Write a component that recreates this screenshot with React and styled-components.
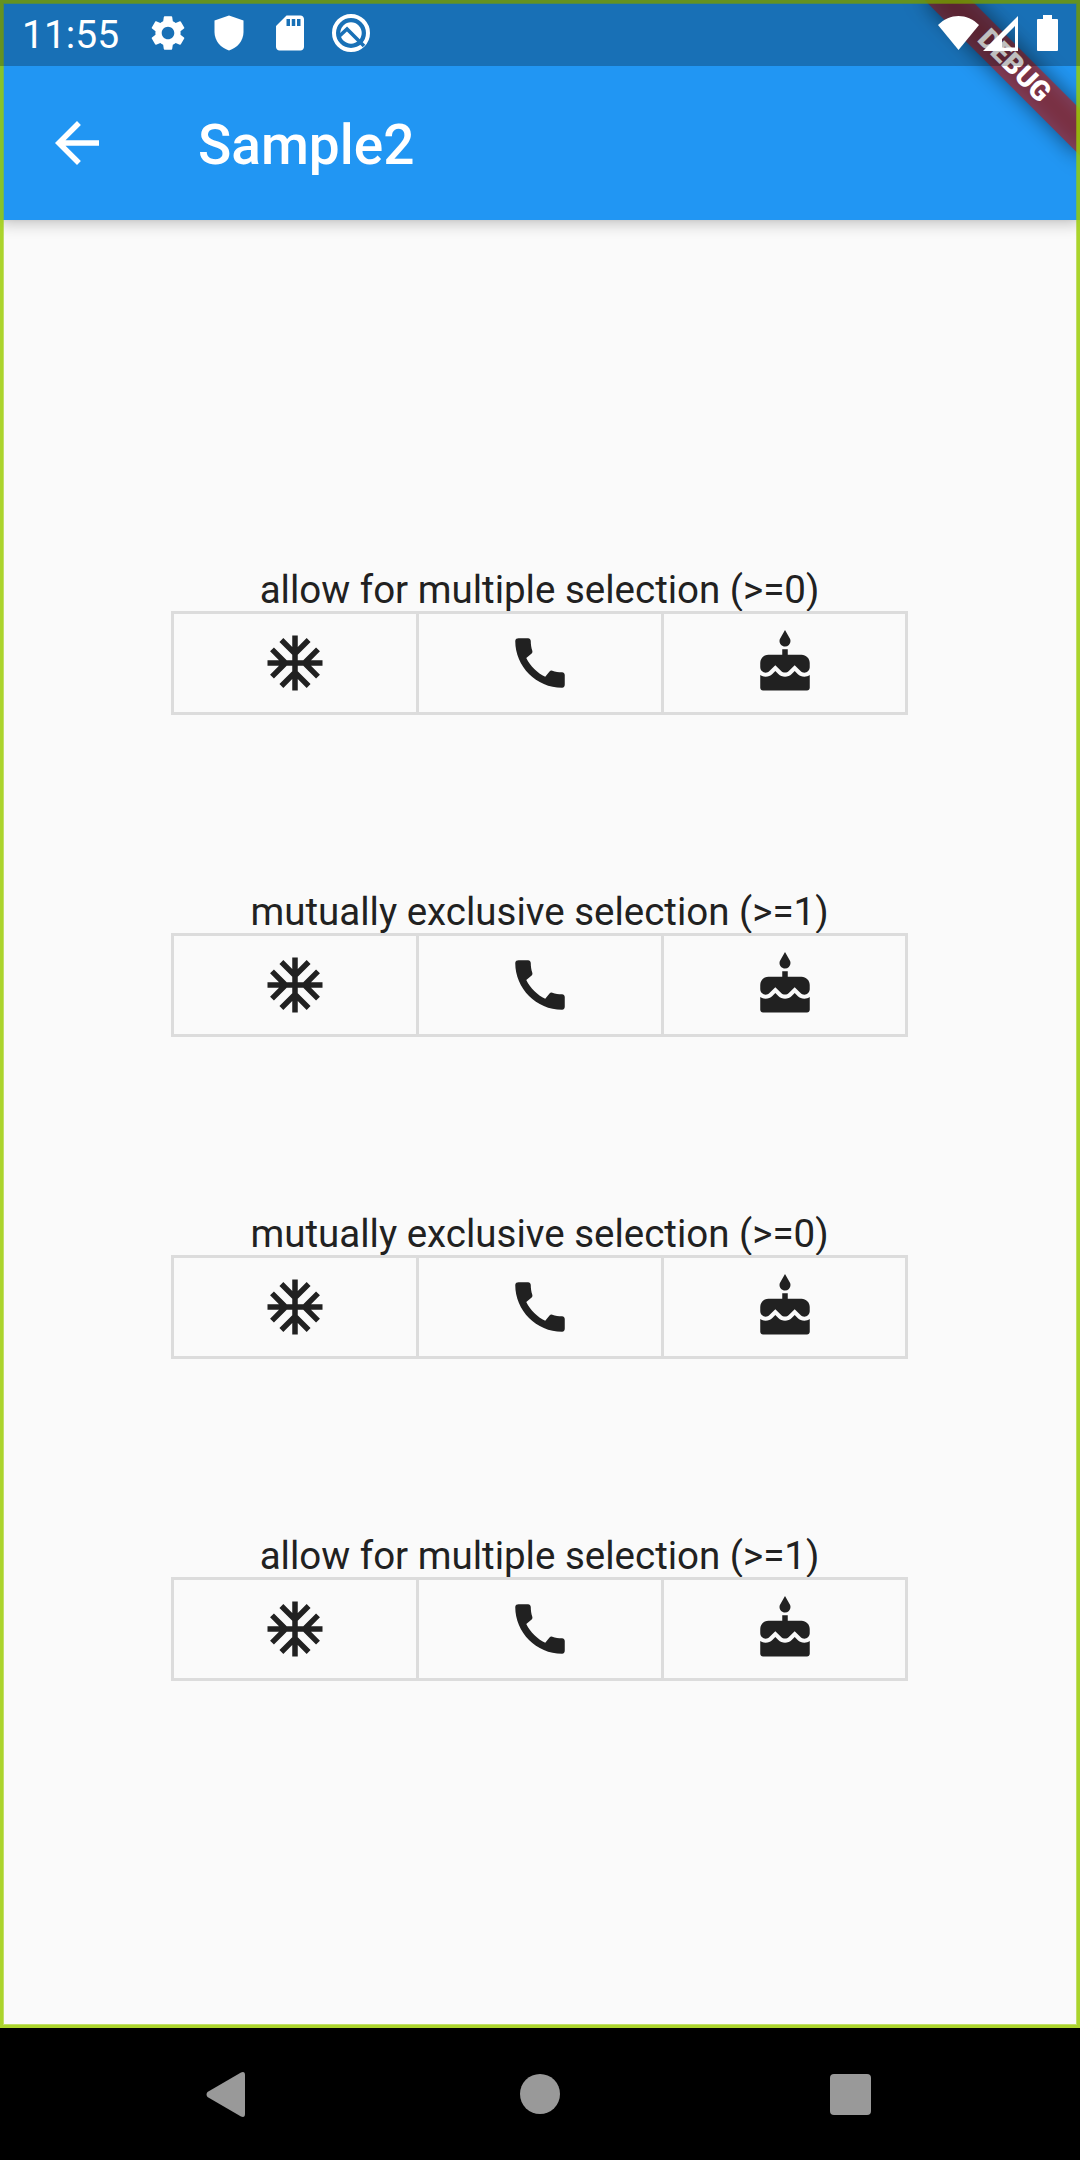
import React from 'react';
import styled, { createGlobalStyle } from 'styled-components';
import { MdAcUnit, MdCake, MdCall, MdArrowBack, MdSettings, MdSdCard } from 'react-icons/md';

const GlobalStyle = createGlobalStyle`
  *, *::before, *::after { box-sizing: border-box; }
  body { margin: 0; font-family: Roboto, sans-serif; }
`;

const Device = styled.div`
  position: relative;
  display: flex;
  flex-direction: column;
  width: 1080px;
  height: 2160px;
  overflow: hidden;
  background: #000;
`;

const Screen = styled.div`
  position: relative;
  display: flex;
  flex-direction: column;
  height: 2028px;
  overflow: hidden;
  background: #fafafa;
`;

const StatusBar = styled.div`
  position: absolute;
  z-index: 5;
  top: 0;
  left: 0;
  display: flex;
  align-items: center;
  justify-content: space-between;
  width: 100%;
  height: 66px;
  padding: 0 22px;
  background: rgba(0, 0, 0, 0.25);
  color: #fff;
`;

const StatusGroup = styled.div`
  display: flex;
  align-items: center;
  height: 66px;
  gap: ${(p) => p.$gap}px;
`;

const Clock = styled.span`
  width: 98px;
  font-size: 39px;
  line-height: 66px;
  padding-top: 3px;
  margin-right: 8px;
  white-space: nowrap;
`;

const Icon = styled.svg`
  display: block;
  flex: none;
  fill: currentColor;
`;

const BatteryIcon = styled(Icon)`
  margin-left: 16px;
`;

const AppBar = styled.header`
  position: relative;
  z-index: 1;
  display: flex;
  align-items: center;
  flex: none;
  height: 220px;
  padding: 66px 44px 0;
  background: #2196f3;
  color: #fff;
  box-shadow: 0 4px 14px rgba(0, 0, 0, 0.22), 0 0 4px rgba(0, 0, 0, 0.06);
`;

const BackButton = styled.button`
  display: flex;
  padding: 0;
  border: 0;
  background: none;
  color: inherit;
`;

const Title = styled.h1`
  margin: 0 0 0 88px;
  padding-top: 3px;
  font-size: 55px;
  font-weight: 500;
  line-height: 64px;
`;

const Body = styled.main`
  display: flex;
  flex: 1;
  flex-direction: column;
  align-items: center;
  gap: 173px;
  padding: 346px 1px 0 0;
`;

const Section = styled.section`
  display: flex;
  flex-direction: column;
  align-items: center;
`;

const Label = styled.div`
  height: 45px;
  font-size: 38.5px;
  line-height: 47px;
  color: #212121;
  white-space: nowrap;
`;

const Toggles = styled.div`
  display: grid;
  grid-template-columns: 242px 245px 244px;
  width: 737px;
  height: 104px;
  border: 3px solid #dcdcdc;
`;

const Toggle = styled.button`
  display: flex;
  align-items: center;
  justify-content: center;
  padding: 0;
  border: 0;
  background: none;
  color: #212121;

  & + & {
    border-left: 3px solid #dcdcdc;
  }
`;

const BannerLayer = styled.div`
  position: absolute;
  z-index: 2;
  top: 0;
  right: 0;
  width: 0;
  height: 0;
  transform: rotate(45deg);
`;

const Banner = styled.div`
  position: absolute;
  left: -110px;
  top: 77px;
  width: 220px;
  height: 33px;

  &::before {
    content: '';
    position: absolute;
    inset: 0;
    background: rgba(0, 0, 0, 0.5);
    filter: blur(10.9px);
  }
`;

const BannerText = styled.div`
  position: relative;
  height: 33px;
  background: rgba(183, 28, 28, 0.627);
  color: #fff;
  font-size: 28.05px;
  font-weight: 900;
  line-height: 32px;
  text-align: center;
`;

const Outline = styled.div`
  position: absolute;
  z-index: 3;
  inset: 0;
  border: 3px solid rgba(155, 205, 3, 0.83);
  box-shadow: inset 0 0 0 1px rgba(155, 205, 3, 0.6);
  pointer-events: none;
`;

const NavBar = styled.nav`
  display: flex;
  flex: 1;
  align-items: center;
  justify-content: center;
  gap: 244px;
  color: #999;
`;

const sections = [
  'allow for multiple selection (>=0)',
  'mutually exclusive selection (>=1)',
  'mutually exclusive selection (>=0)',
  'allow for multiple selection (>=1)',
];

const toggleIcons = [MdAcUnit, MdCall, MdCake];

function Status() {
  return (
    <StatusBar>
      <StatusGroup $gap={19}>
        <Clock>11:55</Clock>
        <MdSettings size={42} />
        <Icon width="42" height="42" viewBox="0 0 42 42">
          <path d="M21 3.500 6.500 8.500V20C6.500 29 13 36 21 38.500 29 36 35.500 29 35.500 20V8.500z" />
        </Icon>
        <MdSdCard size={42} />
        <Icon width="42" height="42" viewBox="0 0 42 42">
          <circle cx="21" cy="21" r="17" fill="none" stroke="currentColor" strokeWidth="4" />
          <circle cx="21" cy="21" r="10.700" />
          <path d="M9.500 24 17 17 34 34" fill="none" stroke="#1970b6" strokeWidth="3.600" />
        </Icon>
      </StatusGroup>
      <StatusGroup $gap={3.5}>
        <Icon width="41" height="34" viewBox="0 0 41 34">
          <path d="M0 9C12-3 29-3 41 9L20.500 34z" />
        </Icon>
        <Icon width="35" height="35" viewBox="0 0 35 35">
          <path fillRule="evenodd" d="M35 0V35H0zM32 10 19 23V31.500H32z" />
        </Icon>
        <BatteryIcon width="21" height="36" viewBox="0 0 21 36">
          <path d="M6 0h9v4h5q1 0 1 1v30q0 1-1 1H1q-1 0-1-1V5q0-1 1-1h5z" />
        </BatteryIcon>
      </StatusGroup>
    </StatusBar>
  );
}

export default function App() {
  return (
    <Device>
      <GlobalStyle />
      <Screen>
        <AppBar>
          <BackButton aria-label="Back">
            <MdArrowBack size={66} />
          </BackButton>
          <Title>Sample2</Title>
        </AppBar>
        <Body>
          {sections.map((text) => (
            <Section key={text}>
              <Label>{text}</Label>
              <Toggles>
                {toggleIcons.map((ToggleIcon, i) => (
                  <Toggle key={i}>
                    <ToggleIcon size={66} />
                  </Toggle>
                ))}
              </Toggles>
            </Section>
          ))}
        </Body>
        <BannerLayer>
          <Banner>
            <BannerText>DEBUG</BannerText>
          </Banner>
        </BannerLayer>
        <Outline />
        <Status />
      </Screen>
      <NavBar>
        <Icon width="66" height="66" viewBox="0 0 66 66">
          <path d="M10.500 31 44 11.500Q48 10 48 14V53Q48 57 44 55.500L10.500 36Q8.500 33.500 10.500 31z" />
        </Icon>
        <Icon width="66" height="66" viewBox="0 0 66 66">
          <circle cx="33" cy="33" r="20" />
        </Icon>
        <Icon width="66" height="66" viewBox="0 0 66 66">
          <rect x="13" y="13" width="41" height="41" rx="4" />
        </Icon>
      </NavBar>
    </Device>
  );
}
